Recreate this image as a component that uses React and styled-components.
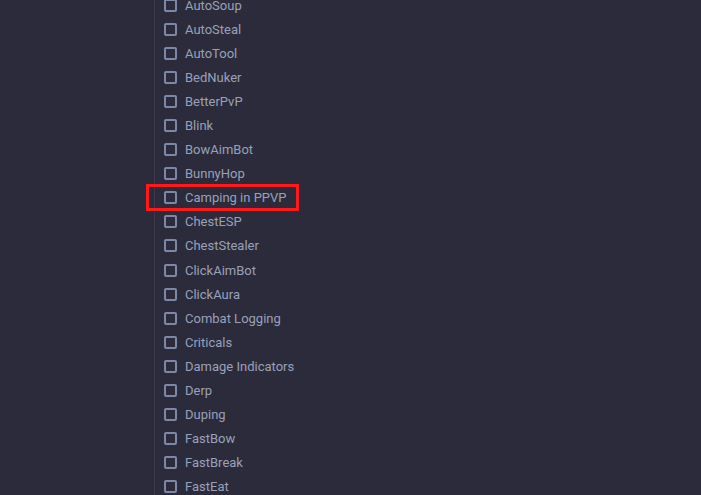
import React from 'react';
import styled, { createGlobalStyle } from 'styled-components';

const GlobalStyle = createGlobalStyle`
  html, body {
    margin: 0;
    padding: 0;
    background: #2c2b3b;
    overflow: hidden;
  }
`;

const Page = styled.div`
  display: flex;
  width: 701px;
  height: 495px;
  background: #2c2b3b;
  font-family: Roboto, "Liberation Sans", sans-serif;
  overflow: hidden;
`;

const Side = styled.aside`
  width: 154px;
  flex-shrink: 0;
  border-right: 1px solid #3b3a4d;
`;

const List = styled.ul`
  list-style: none;
  margin: -7px 0 0;
  padding: 0 0 0 9px;
`;

const Row = styled.li`
  position: relative;
  display: flex;
  align-items: center;
  gap: 8px;
  height: 24.1px;
  font-size: 13px;
  color: #99a1ba;
  white-space: nowrap;

  ${(props) => props.$marked && `
    &::after {
      content: '';
      position: absolute;
      left: -18px;
      top: -2px;
      width: 147px;
      height: 21px;
      border: 3px solid #ff1a1a;
    }
  `}
`;

const Box = styled.span`
  box-sizing: border-box;
  width: 13px;
  height: 13px;
  border: 2px solid #7d87a8;
  border-radius: 2px;
  flex-shrink: 0;
`;

const modules = [
  'AutoSoup', 'AutoSteal', 'AutoTool', 'BedNuker', 'BetterPvP', 'Blink',
  'BowAimBot', 'BunnyHop', 'Camping in PPVP', 'ChestESP', 'ChestStealer',
  'ClickAimBot', 'ClickAura', 'Combat Logging', 'Criticals',
  'Damage Indicators', 'Derp', 'Duping', 'FastBow', 'FastBreak', 'FastEat',
];

export default function App() {
  return (
    <Page>
      <GlobalStyle />
      <Side />
      <List>
        {modules.map((name) => (
          <Row key={name} $marked={name === 'Camping in PPVP'}>
            <Box />
            {name}
          </Row>
        ))}
      </List>
    </Page>
  );
}
